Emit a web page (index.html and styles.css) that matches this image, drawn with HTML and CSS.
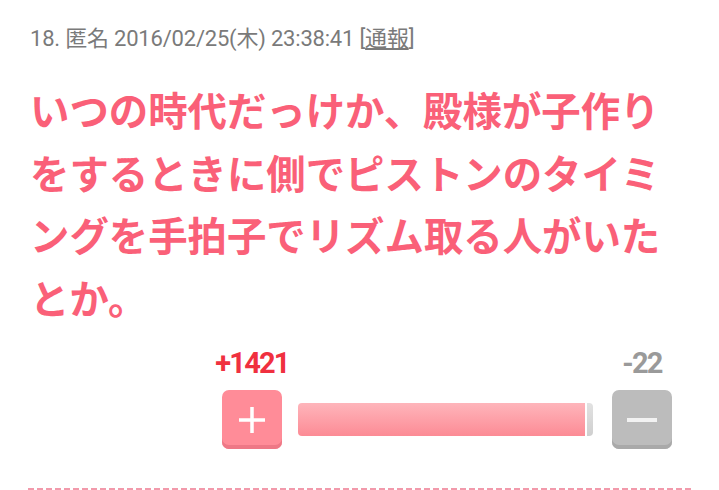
FILE: index.html
```html
<!DOCTYPE html>
<html lang="ja">
<head>
  <meta charset="UTF-8" />
  <meta name="viewport" content="width=device-width, initial-scale=1.0"/>
  <title>18. 匿名</title>
  <link rel="stylesheet" href="styles.css">
</head>
<body>
  <div class="comment">
    <div class="comment-head">18. 匿名 2016/02/25(木) 23:38:41 [<a href="#" class="report">通報</a>]</div>

    <div class="comment-body">いつの時代だっけか、殿様が子作りをするときに側でピストンのタイミングを手拍子でリズム取る人がいたとか。</div>

    <div class="vote">
      <div class="vote-count plus">+1421</div>
      <div></div>
      <div class="vote-count minus">-22</div>

      <button class="vote-btn plus" aria-label="プラス">
        <svg width="28" height="28" viewBox="0 0 28 28"><path d="M14 1v26M1 14h26" stroke="#fff" stroke-width="3.5" fill="none"/></svg>
      </button>
      <div class="vote-bar">
        <div class="bar-plus" style="width: 97.3%"></div>
        <div class="bar-minus"></div>
      </div>
      <button class="vote-btn minus" aria-label="マイナス">
        <svg width="30" height="6" viewBox="0 0 30 6"><path d="M0 3h30" stroke="#f2f2f2" stroke-width="4" fill="none"/></svg>
      </button>
    </div>

    <div class="divider"></div>
  </div>
</body>
</html>
```

FILE: styles.css
```css
:root {
  --pink: #fa6078;
  --red: #f0303f;
  --muted: #7a7a7a;
}

body {
  margin: 0;
  background: #fff;
  font-family: Roboto, "Noto Sans CJK JP", sans-serif;
}

.comment {
  padding: 26px 27px 0 30px;
}

.comment-head {
  font-size: 22px;
  line-height: 26px;
  color: var(--muted);
  letter-spacing: -0.2px;
  white-space: nowrap;
}

.report {
  color: var(--muted);
  text-decoration: underline;
  text-underline-offset: 2px;
}

.comment-body {
  width: 645px;
  margin-top: 26px;
  font-family: "Noto Sans CJK JP", sans-serif;
  font-weight: bold;
  font-size: 39.4px;
  line-height: 62.5px;
  color: var(--pink);
}

/* vote area: counts above, buttons and ratio bar below */
.vote {
  display: grid;
  grid-template-columns: 60px 1fr 60px;
  row-gap: 12px;
  width: 450px;
  margin: 20px 0 0 192px;
  align-items: center;
}

.vote-count {
  display: flex;
  justify-content: center;
  white-space: nowrap;
  font-weight: bold;
  font-size: 29px;
  line-height: 30px;
  letter-spacing: -1.8px;
}

.vote-count.plus {
  color: var(--red);
}

.vote-count.minus {
  color: #9a9a9a;
}

.vote-btn {
  width: 60px;
  height: 59px;
  padding: 0;
  border: none;
  border-radius: 7px;
  display: flex;
  align-items: center;
  justify-content: center;
  cursor: pointer;
}

.vote-btn.plus {
  background: #ff8c98;
  box-shadow: inset 0 -4px 0 #ee7886;
}

.vote-btn.minus {
  background: #bcbcbc;
  box-shadow: inset 0 -4px 0 #a9a9a9;
}

.vote-bar {
  display: flex;
  gap: 2px;
  height: 33px;
  margin: 0 19px 0 16px;
  border-radius: 4px;
  overflow: hidden;
}

.bar-plus {
  background: linear-gradient(#feb5bb, #fc8b95);
}

.bar-minus {
  flex: 1;
  background: linear-gradient(#e2e2e2, #cfcfcf);
}

.divider {
  height: 2px;
  margin: 39px 0 0 -2px;
  background: repeating-linear-gradient(90deg, #f29aab 0 6px, transparent 6px 9px);
}
```
